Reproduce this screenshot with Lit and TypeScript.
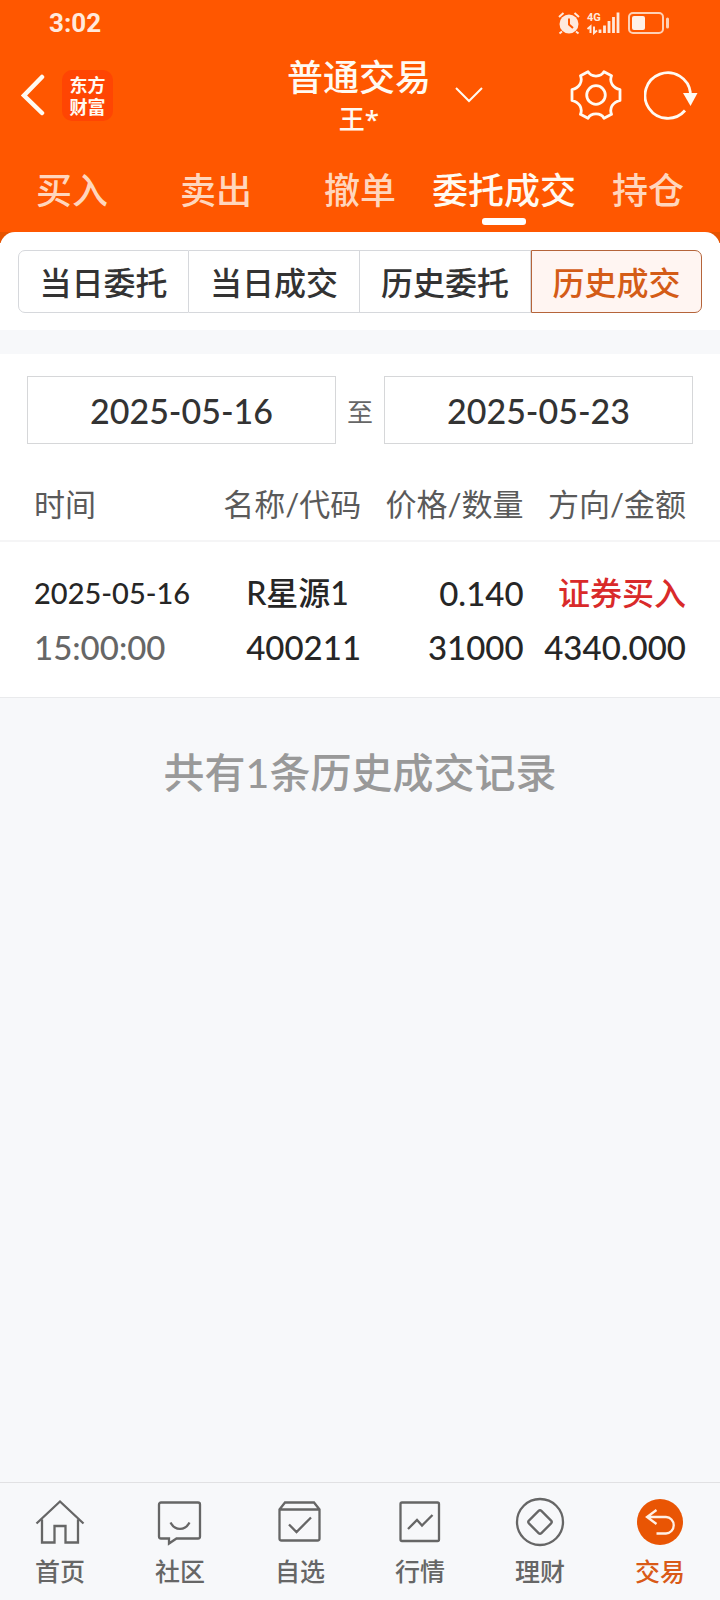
import { LitElement, html, css, svg } from "lit";
import { customElement, state } from "lit/decorators.js";

const NAV_ICONS = [
  svg`<path d="M1.5 24.500 25 2.500l23.500 22M7 20.500V43.500h12.500V27h11v16.500H43V20.500"/>`,
  svg`<path d="M6 3.500h37a2 2 0 0 1 2 2v32a2 2 0 0 1-2 2H21.500l-7.500 5v-5H6a2 2 0 0 1-2-2v-32a2 2 0 0 1 2-2z"/><path d="M15.500 23.500c4.500 8.500 14.500 8.500 19 0"/>`,
  svg`<path d="M4.500 10.500 10 3.500h29l5.500 7v29a2 2 0 0 1-2 2h-36a2 2 0 0 1-2-2zM4.500 10.500h40M14 25.500l7.500 7.500L36 18.500"/>`,
  svg`<rect x="5.500" y="3.500" width="38.500" height="38.500" rx="1.500"/><path d="M13 30l9-9 5 5.500L37.500 16"/>`,
  svg`<circle cx="25" cy="23" r="23"/><path d="M23.600 11.900 13.900 21.600a2 2 0 0 0 0 2.800l9.700 9.700a2 2 0 0 0 2.800 0l9.700-9.700a2 2 0 0 0 0-2.800l-9.700-9.700a2 2 0 0 0-2.800 0z"/>`,
  svg`<circle cx="25" cy="23" r="23" fill="#e95504" stroke="none"/><path d="M21.500 11 12 18l9.500 7M12.500 18H31a7.500 8 0 0 1 0 16.500h-9.500" stroke="#fff0e6"/>`,
];

@customElement("app-root")
class AppRoot extends LitElement {
  static styles = css`
    :host {
      display: flex;
      flex-direction: column;
      min-height: 100vh;
      background: #f7f8fa;
      color: #262626;
      font-family: Lato, "Noto Sans CJK SC", sans-serif;
      font-weight: 500;
    }
    * { box-sizing: border-box; }
    button, input {
      font: inherit;
      color: inherit;
      margin: 0;
      padding: 0;
      border: 0;
      background: none;
    }
    button { cursor: pointer; }
    a { color: inherit; text-decoration: none; }
    svg { display: block; fill: none; }
    .top { background: #ff5700; color: #fffaf2; }
    .status {
      display: flex;
      align-items: center;
      justify-content: space-between;
      height: 46px;
      padding: 0 50px 0 49px;
      color: #ffe9dc;
    }
    .clock { font: 700 26px/46px Roboto, sans-serif; }
    .bar {
      display: grid;
      grid-template-columns: 1fr auto 1fr;
      align-items: center;
      height: 98px;
      padding: 0 22px 0 20px;
    }
    .left, .right { display: flex; align-items: center; }
    .left { gap: 17px; }
    .right { gap: 22px; padding-left: 24px; }
    .more { margin-right: auto; }
    .logo {
      display: flex;
      flex-direction: column;
      align-items: center;
      justify-content: center;
      width: 51px;
      height: 51px;
      border-radius: 10px;
      background: #ff4503;
      font: 700 18px/22px "Noto Sans CJK SC", sans-serif;
    }
    .account { padding-top: 4px; }
    .name { display: block; font-size: 36px; line-height: 44px; }
    .holder {
      display: block;
      font-family: "Noto Sans", "Noto Sans CJK SC", sans-serif;
      font-size: 26px;
      line-height: 40px;
    }
    .tabs {
      display: grid;
      grid-template-columns: repeat(5, 1fr);
      height: 88px;
    }
    .tab {
      display: flex;
      flex-direction: column;
      align-items: center;
      padding-top: 21px;
      gap: 3px;
      font-size: 36px;
      line-height: 50px;
      color: #ffd6bd;
      white-space: nowrap;
    }
    .tab.on { color: #fffaf2; }
    .tab.on::after {
      content: "";
      width: 44px;
      height: 7px;
      border-radius: 3px;
      background: #fff;
    }
    .sheet-back { background: linear-gradient(#e65300 11px, #fff 11px); }
    .segments {
      display: grid;
      grid-template-columns: repeat(4, 1fr);
      padding: 18px 18px 17px;
      background: #fff;
      border-radius: 15px 15px 0 0;
    }
    .seg {
      height: 63px;
      padding-top: 2px;
      border: 1px solid #d6d8dc;
      border-left-width: 0;
      font-size: 32px;
      line-height: 59px;
      color: #333;
      white-space: nowrap;
    }
    .seg:first-child { border-left-width: 1px; border-radius: 7px 0 0 7px; }
    .seg:last-child { border-radius: 0 7px 7px 0; }
    .seg.on { border-left-width: 1px; border-color: #b5643a; background: #fff5f2; color: #d45c17; }
    .records { margin-top: 24px; background: #fff; border-bottom: 1px solid #e9eaec; }
    .range {
      display: grid;
      grid-template-columns: 1fr 48px 1fr;
      align-items: center;
      padding: 22px 27px 0;
      color: #333;
    }
    .date {
      width: 100%;
      height: 68px;
      border: 1px solid #d6d7d9;
      text-align: center;
      font-size: 34px;
    }
    .to { text-align: center; font-size: 26px; color: #666; font-weight: 400; }
    table { width: 100%; border-collapse: collapse; table-layout: fixed; }
    .c1 { width: 31%; }
    .c2 { width: 19%; }
    .c3 { width: 23%; }
    th {
      height: 97px;
      padding: 24px 0 0;
      border-bottom: 2px solid #f5f5f6;
      font-size: 31px;
      line-height: 44px;
      font-weight: 400;
      color: #5a5a5a;
      text-align: right;
      white-space: nowrap;
    }
    td {
      padding: 24px 0 23px;
      font-size: 33px;
      line-height: 54px;
      text-align: right;
      white-space: nowrap;
    }
    th:first-child, td:first-child { padding-left: 34px; text-align: left; }
    th:nth-child(3), td:nth-child(3) { padding-right: 2px; }
    th:last-child, td:last-child { padding-right: 34px; }
    td:nth-child(2) { padding-left: 23px; text-align: left; }
    td span { display: block; }
    .day { font-size: 29px; }
    .time { color: #666; }
    .cn { font-size: 32px; }
    .buy { color: #d92a2a; }
    .total {
      margin: 0;
      padding: 45px 0;
      text-align: center;
      font-size: 41px;
      line-height: 60px;
      color: #999;
    }
    .nav {
      display: grid;
      grid-template-columns: repeat(6, 1fr);
      margin-top: auto;
      height: 118px;
      border-top: 1px solid #e1e1e3;
      color: #666;
    }
    .item {
      display: flex;
      flex-direction: column;
      align-items: center;
      padding-top: 16px;
      gap: 2px;
      font-size: 25px;
      line-height: 40px;
    }
    .item svg { overflow: visible; stroke: #666; stroke-width: 2.3; }
    .item.on { color: #d95a17; }
  `;

  @state() tab = 3;
  @state() seg = 3;

  render() {
    return html`
      <header class="top">
        <div class="status">
          <span class="clock">3:02</span>
          <svg width="112" height="24" viewBox="0 0 112 24" aria-hidden="true">
            <circle cx="11" cy="13" r="9.500" fill="#ffe9dc" />
            <path d="M1 6l4.500-4M21 6l-4.500-4M4 20.500l-2.500 2M18 20.500l2.500 2" stroke="#ffe9dc" stroke-width="2" />
            <path d="M11 7.500v6l4 3.500" stroke="#ff5700" stroke-width="2" />
            <text x="29" y="10" font-family="Roboto" font-weight="700" font-size="11" fill="#ffe9dc">4G</text>
            <path d="M32.500 22v-6.500l-3 2.500M36 15.500v6.500l3-2.500" stroke="#ffe9dc" stroke-width="2" />
            <path d="M42 18.500v3.500M46.500 14.500v7.500M51 10v12M55.500 6v16M60 1.500v20.500" stroke="#ffe9dc" stroke-width="2.800" />
            <rect x="71" y="2" width="34" height="20" rx="4" stroke="#ffd0b5" stroke-width="2" />
            <rect x="74" y="5" width="13" height="14" rx="2" fill="#fff0e8" />
            <path d="M109.500 8v8" stroke="#ffd0b5" stroke-width="3" stroke-linecap="round" />
          </svg>
        </div>
        <div class="bar">
          <div class="left">
            <button aria-label="返回">
              <svg width="25" height="42" viewBox="0 0 25 42" stroke="#fffaf2" stroke-width="4.500"><path d="M22 3 4 21.500 22 39" stroke-linecap="round" /></svg>
            </button>
            <span class="logo"><span>东方</span><span>财富</span></span>
          </div>
          <button class="account">
            <span class="name">普通交易</span>
            <span class="holder">王*</span>
          </button>
          <div class="right">
            <button class="more" aria-label="切换账户">
              <svg width="28" height="18" viewBox="0 0 28 18" stroke="#fffaf2" stroke-width="2"><path d="M1 2l13 13L27 2" /></svg>
            </button>
            <button aria-label="设置">
              <svg width="52" height="50" viewBox="-26 -25 52 50" stroke="#fffaf2" stroke-width="2.800" stroke-linejoin="round">
                <circle r="9.300" />
                <path d="M-8 -23.300C-5 -17.500 5 -17.500 8 -23.300L15.500 -19.300C13 -13 17 -7 24 -5.500V5.500C17 7 13 13 15.500 19.300L8 23.300C5 17.500 -5 17.500 -8 23.300L-15.500 19.300C-13 13 -17 7 -24 5.500V-5.500C-17 -7 -13 -13 -15.500 -19.300Z" />
              </svg>
            </button>
            <button aria-label="刷新">
              <svg width="54" height="50" viewBox="-24 -25 54 50" stroke="#fffaf2" stroke-width="2.800"><path d="M17 15.500A22.800 22.800 0 1 1 22.500 -2" /><path d="M15 -2H29.500L22.500 11z" fill="#fffaf2" stroke="none" /></svg>
            </button>
          </div>
        </div>
        <nav class="tabs">
          ${["买入", "卖出", "撤单", "委托成交", "持仓"].map(
            (t, i) => html`<button class="tab ${i === this.tab ? "on" : ""}" @click=${() => (this.tab = i)}>${t}</button>`
          )}
        </nav>
      </header>
      <main>
        <div class="sheet-back">
          <div class="segments">
            ${["当日委托", "当日成交", "历史委托", "历史成交"].map(
              (t, i) => html`<button class="seg ${i === this.seg ? "on" : ""}" @click=${() => (this.seg = i)}>${t}</button>`
            )}
          </div>
        </div>
        <section class="records">
          <div class="range">
            <input class="date" type="text" id="from" aria-label="开始日期" .value=${"2025-05-16"} />
            <label class="to" for="until">至</label>
            <input class="date" type="text" id="until" .value=${"2025-05-23"} />
          </div>
          <table>
            <colgroup><col class="c1" /><col class="c2" /><col class="c3" /><col /></colgroup>
            <thead>
              <tr><th>时间</th><th>名称/代码</th><th>价格/数量</th><th>方向/金额</th></tr>
            </thead>
            <tbody>
              <tr>
                <td><span class="day">2025-05-16</span><span class="time">15:00:00</span></td>
                <td><span class="cn">R星源1</span><span>400211</span></td>
                <td><span>0.140</span><span>31000</span></td>
                <td><span class="cn buy">证券买入</span><span>4340.000</span></td>
              </tr>
            </tbody>
          </table>
        </section>
        <p class="total">共有1条历史成交记录</p>
      </main>
      <nav class="nav">
        ${["首页", "社区", "自选", "行情", "理财", "交易"].map(
          (t, i) => html`<a class="item ${i === 5 ? "on" : ""}" href="#"><svg width="50" height="50" viewBox="0 0 50 50" aria-hidden="true">${NAV_ICONS[i]}</svg>${t}</a>`
        )}
      </nav>
    `;
  }
}
